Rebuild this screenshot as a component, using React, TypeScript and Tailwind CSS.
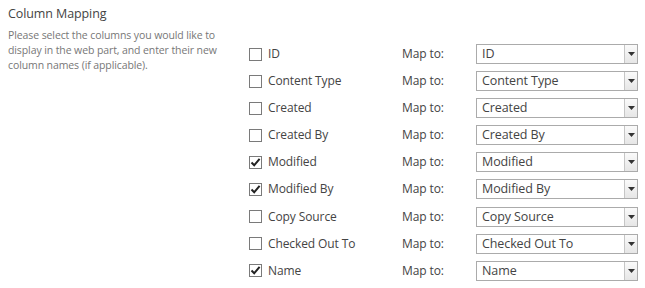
import React from "react";

// Columns shown in the mapping list
const columns = [
  { name: "ID", checked: false },
  { name: "Content Type", checked: false },
  { name: "Created", checked: false },
  { name: "Created By", checked: false },
  { name: "Modified", checked: true },
  { name: "Modified By", checked: true },
  { name: "Copy Source", checked: false },
  { name: "Checked Out To", checked: false },
  { name: "Name", checked: true },
];

function CheckBox({ checked }: { checked: boolean }) {
  return (
    <span className="w-[13px] h-[13px] border border-[#7a7a7a] bg-white flex items-center justify-center shrink-0">
      {checked && (
        <svg width="11" height="11" viewBox="0 0 11 11">
          <path d="M1.5 5.5 L4.2 8.3 L9.6 1.8" fill="none" stroke="#222" strokeWidth="2" />
        </svg>
      )}
    </span>
  );
}

function Dropdown({ value }: { value: string }) {
  return (
    <div className="w-[162px] h-[20px] border border-[#ababab] bg-white flex items-stretch">
      <span className="flex-1 pl-[5px] text-[12.5px] leading-[18px] text-[#444] tracking-[-0.1px]">{value}</span>
      <span className="w-[13px] border-l border-[#c6c6c6] bg-gradient-to-b from-[#fafafa] to-[#e6e6e6] flex items-center justify-center">
        <svg width="7" height="4" viewBox="0 0 7 4">
          <path d="M0 0 H7 L3.5 4 Z" fill="#333" />
        </svg>
      </span>
    </div>
  );
}

export default function App() {
  return (
    <div
      className="w-[645px] h-[288px] bg-white flex pl-2"
      style={{ fontFamily: '"Segoe UI", "Open Sans", "Liberation Sans", sans-serif' }}
    >
      {/* Section title and description */}
      <div className="w-[241px] shrink-0 pt-[5px]">
        <h2 className="text-[12.5px] leading-[18px] text-[#444] font-normal tracking-[-0.1px]">Column Mapping</h2>
        <p className="mt-[5px] w-[218px] text-[10.5px] leading-[15px] text-[#777] tracking-[-0.1px]">
          Please select the columns you would like to display in the web part, and enter their new
          column names (if applicable).
        </p>
      </div>

      {/* Mapping rows */}
      <div className="pt-[44px] flex flex-col gap-[7.1px]">
        {columns.map((col) => (
          <div key={col.name} className="h-[20px] flex items-center">
            <div className="w-[153px] flex items-center gap-[6px]">
              <CheckBox checked={col.checked} />
              <span className="text-[12px] text-[#444] tracking-[-0.1px]">{col.name}</span>
            </div>
            <span className="w-[74px] text-[12px] text-[#444] tracking-[-0.1px]">Map to:</span>
            <Dropdown value={col.name} />
          </div>
        ))}
      </div>
    </div>
  );
}
